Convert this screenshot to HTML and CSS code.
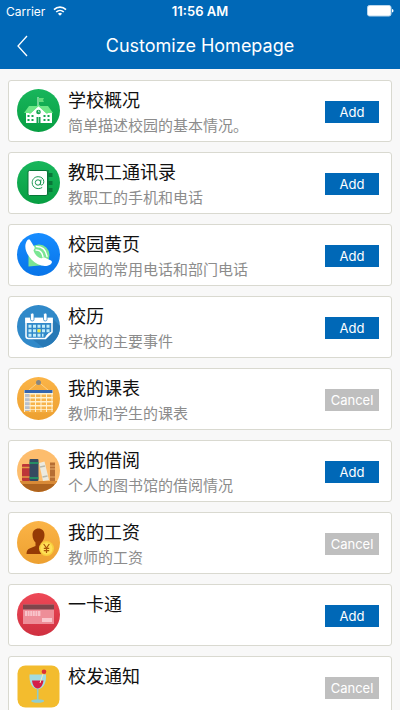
FILE: index.html
```html
<!DOCTYPE html>
<html lang="zh-CN">

<head>
    <meta charset="utf-8">
    <meta name="viewport" content="width=device-width, initial-scale=1">
    <title>Customize Homepage</title>
    <link rel="stylesheet" href="styles.css">
</head>

<body>
    <header class="header">
        <div class="status-bar">
            <div class="carrier">
                <span>Carrier</span>
                <svg width="14" height="10" viewBox="0 0 14 10" fill="none" stroke="#fff" stroke-width="1.6">
                    <path d="M1 3.6C4.4.3 9.6.3 13 3.6M3.2 6C5.4 3.9 8.6 3.9 10.8 6" />
                    <path d="M7 9.8L4.9 7.7Q7 6 9.1 7.7Z" fill="#fff" stroke="none" />
                </svg>
            </div>
            <span class="clock">11:56 AM</span>
            <div class="battery">
                <svg width="27" height="12" viewBox="0 0 27 12">
                    <rect x=".5" y=".5" width="23.5" height="10.5" rx="2" fill="#fff" stroke="#b9d6ec" />
                    <path d="M25 4q1.5.3 1.5 1.8T25 7.6z" fill="#fff" />
                </svg>
            </div>
        </div>
        <div class="nav-bar">
            <button class="back" type="button" aria-label="Back">
                <svg width="11" height="22" viewBox="0 0 11 22" fill="none" stroke="#fff" stroke-width="1.3">
                    <path d="M10 1L1 11l9 10" />
                </svg>
            </button>
            <h1>Customize Homepage</h1>
        </div>
    </header>

    <!-- List of homepage modules -->
    <ul class="module-list">
        <li class="card">
            <svg class="icon" viewBox="0 0 43 43">
                <defs>
                    <linearGradient id="green" x2="0" y2="1"><stop stop-color="#18b65c" /><stop offset="1" stop-color="#079e42" /></linearGradient>
                </defs>
                <circle cx="21.5" cy="21.5" r="21.5" fill="url(#green)" />
                <path d="M21 8v9" stroke="#d9f7df" />
                <path d="M21.5 9h5.500l-1 2 1 2h-5.500z" fill="#63dc7c" />
                <path d="M9 23h26v11H9z" fill="#fff" />
                <path d="M12 17h19l5 7H7z" fill="#6ee787" />
                <path d="M14 24l7.500-7 7.500 7v10H14z" fill="#fff" />
                <path d="M12.500 24.500l9-8.200 9 8.200" fill="none" stroke="#6ee787" stroke-width="1.5" />
                <circle cx="21.5" cy="23" r="2.3" fill="#15a551" />
                <path d="M21.500 21.500V23h1.300" stroke="#fff" stroke-width=".6" fill="none" />
                <path d="M10.500 26h2v2h-2zm4 0h2v2h-2zm12 0h2v2h-2zm4 0h2v2h-2zM10.500 30h2v2h-2zm4 0h2v2h-2zm12 0h2v2h-2zm4 0h2v2h-2zM19.500 28h4v6h-4z" fill="#15a551" />
                <path d="M21.500 28v6" stroke="#fff" stroke-width=".5" />
            </svg>
            <div class="info">
                <h2>学校概况</h2>
                <p>简单描述校园的基本情况。</p>
            </div>
            <button class="btn" type="button">Add</button>
        </li>
        <li class="card">
            <svg class="icon" viewBox="0 0 43 43">
                <circle cx="21.5" cy="21.5" r="21.5" fill="url(#green)" />
                <path d="M31 12h4.500v4H31zm0 8h4.500v4H31zm0 7h4.500v4H31z" fill="#087638" />
                <path d="M31 9v25" stroke="#0b8543" stroke-width="1.500" />
                <rect x="11" y="9.500" width="19.500" height="25" rx="1.500" fill="#fff" stroke="#087638" />
                <g fill="none" stroke="#16964f">
                    <circle cx="21" cy="21.5" r="2.7" />
                    <path d="M24 18.500l-.7 4.500c0 2 3.500 1.300 3.500-2.300 0-3.200-2.600-5-5.600-5-3.800 0-6 2.800-6 6 0 5 5.500 7.500 10 4.800" />
                </g>
            </svg>
            <div class="info">
                <h2>教职工通讯录</h2>
                <p>教职工的手机和电话</p>
            </div>
            <button class="btn" type="button">Add</button>
        </li>
        <li class="card">
            <svg class="icon" viewBox="0 0 43 43">
                <defs>
                    <linearGradient id="blue" x2="0" y2="1"><stop stop-color="#168cff" /><stop offset="1" stop-color="#0874e8" /></linearGradient>
                </defs>
                <circle cx="21.5" cy="21.5" r="21.5" fill="url(#blue)" />
                <path d="M11.500 33.500V22a10.500 10.500 0 1 1 11 10.500z" fill="#7be694" />
                <path d="M19 17q6 0 7 7M19.500 13.500q9 0 10.500 10" fill="none" stroke="#fff" stroke-width="1.400" stroke-linecap="round" />
                <path d="M10.500 7c1.500-1 2.500-.4 3 .8l4 6.500c.6 1.500-1 2-1 3.200 1 3.700 4 6.800 7.500 7.800 1.500 0 1.500-1.300 3.500-.8l6.500 3c1.800 1 .7 3-1 4.200-5 3-13 .8-18.500-5.200S6 13 10.500 7z" fill="#fff" />
            </svg>
            <div class="info">
                <h2>校园黄页</h2>
                <p>校园的常用电话和部门电话</p>
            </div>
            <button class="btn" type="button">Add</button>
        </li>
        <li class="card">
            <svg class="icon" viewBox="0 0 43 43">
                <circle cx="21.5" cy="21.5" r="21.5" fill="#3089c9" />
                <path d="M35 13l8 8a21.500 21.500 0 0 1-17 21.500L15 34z" fill="#2779b6" />
                <path d="M9 13.500h26V27l-6.500 6.500h-17Q9 33.500 9 31z" fill="#3089c9" stroke="#fff" stroke-width="1.500" />
                <path d="M8.300 12.800h27.400V18H8.300z" fill="#fff" />
                <path d="M28.500 33.500q1-5 6.500-6.500" fill="#fff" stroke="#fff" />
                <g fill="#fff" stroke="#3089c9" stroke-width=".8">
                    <rect x="13.500" y="8" width="3.500" height="8" rx="1.700" />
                    <rect x="26.500" y="8" width="3.500" height="8" rx="1.700" />
                </g>
                <path d="M11.500 21.300h21M11.500 25.800h21M11.500 30.300h15" stroke="#c2edfa" stroke-width="3" stroke-dasharray="3 1.500" />
                <path d="M20.500 24.300h3v3h-3z" fill="#f4ed35" />
            </svg>
            <div class="info">
                <h2>校历</h2>
                <p>学校的主要事件</p>
            </div>
            <button class="btn" type="button">Add</button>
        </li>
        <li class="card">
            <svg class="icon" viewBox="0 0 43 43">
                <defs>
                    <linearGradient id="orange" x2="0" y2="1"><stop stop-color="#fbb447" /><stop offset="1" stop-color="#eda030" /></linearGradient>
                </defs>
                <circle cx="21.5" cy="21.5" r="21.5" fill="url(#orange)" />
                <path d="M12 13l9.500-8 9.500 8" fill="none" stroke="#ffe0a4" stroke-width=".7" />
                <circle cx="21.5" cy="5.5" r="2.5" fill="#898782" />
                <path d="M7 13h29v22H7z" fill="#fff1cf" />
                <path d="M7.500 13h28v3h-28z" fill="#3565ae" />
                <path d="M8 18.700h28M8 22.700h28M8 26.700h28M8 30.700h28M8 34h28" stroke="#f7b34b" stroke-width="2.600" stroke-dasharray="4.500 1" />
                <path d="M8 17h4.500v17H8z" fill="#b8c0ce" />
                <path d="M8 20.700h5M8 24.700h5M8 28.700h5M8 32.500h5" stroke="#f5eee2" />
            </svg>
            <div class="info">
                <h2>我的课表</h2>
                <p>教师和学生的课表</p>
            </div>
            <button class="btn btn-cancel" type="button">Cancel</button>
        </li>
        <li class="card">
            <svg class="icon" viewBox="0 0 43 43">
                <defs>
                    <clipPath id="round"><circle cx="21.5" cy="21.5" r="21.5" /></clipPath>
                </defs>
                <g clip-path="url(#round)">
                    <path d="M0 0h43v43H0z" fill="#fdbd6d" />
                    <path d="M0 32h43v11H0z" fill="#ad631f" />
                    <path d="M0 32h43v3H0z" fill="#d88a37" />
                    <rect x="5" y="15" width="8" height="17" rx="1" fill="#bd3538" />
                    <path d="M5 18.500h8M5 28h8" stroke="#e49b43" stroke-width="1.500" />
                    <rect x="12.500" y="10" width="9" height="22" rx="1" fill="#364a60" />
                    <path d="M12.500 14h9M12.500 29h9" stroke="#20a565" stroke-width="1.500" />
                    <path d="M22 14l5.500-1.500L32 31l-6 1z" fill="#eceadf" />
                    <path d="M23 18l5-1M25.500 28l5-1" stroke="#b8b9ac" stroke-width="1.300" />
                    <path d="M33 13.500h5V32h-5z" fill="#b66e33" />
                    <path d="M33 17h5M33 20h5M33 28h5" stroke="#e9ad6c" />
                </g>
            </svg>
            <div class="info">
                <h2>我的借阅</h2>
                <p>个人的图书馆的借阅情况</p>
            </div>
            <button class="btn" type="button">Add</button>
        </li>
        <li class="card">
            <svg class="icon" viewBox="0 0 43 43">
                <circle cx="21.5" cy="21.5" r="21.5" fill="url(#orange)" />
                <path d="M15.500 14c0-4.200 2.500-6.500 6-6.500s6 2.300 6 6.500c0 3.500-1.500 6-3 7.500v3.500l7 3v5H9.500c0-3 1-4.500 3-5.500l6-2.500v-3.500c-1.500-1.500-3-4-3-7.500z" fill="#953a05" />
                <circle cx="29.5" cy="27.5" r="7.5" fill="#f8cf3d" />
                <circle cx="29.5" cy="27.5" r="6" fill="#ffdf57" />
                <path d="M26.700 23l2.800 4 2.800-4M29.500 27v5M26.800 27.300h5.400M26.800 29.600h5.400" fill="none" stroke="#a9550a" stroke-width="1.200" />
            </svg>
            <div class="info">
                <h2>我的工资</h2>
                <p>教师的工资</p>
            </div>
            <button class="btn btn-cancel" type="button">Cancel</button>
        </li>
        <li class="card">
            <svg class="icon" viewBox="0 0 43 43">
                <defs>
                    <linearGradient id="red" x2="0" y2="1"><stop stop-color="#ee4957" /><stop offset="1" stop-color="#cf3040" /></linearGradient>
                </defs>
                <circle cx="21.5" cy="21.5" r="21.5" fill="url(#red)" />
                <path d="M6 11.500h31V31H6z" fill="#ee8e98" />
                <path d="M6 11.500h31v5H6z" fill="#80454b" />
                <path d="M8 20.500h16" stroke="#f8c4ca" stroke-width="5" stroke-dasharray="2 .6" />
                <path d="M25 25h10v4H25z" fill="#fac7cd" />
            </svg>
            <div class="info">
                <h2>一卡通</h2>
            </div>
            <button class="btn" type="button">Add</button>
        </li>
        <li class="card">
            <svg class="icon" viewBox="0 0 43 43">
                <rect x=".5" y=".5" width="42" height="42" rx="8" fill="#f3bc2e" />
                <path d="M12.500 9.500h16.500c.5 7-2 14.500-8.200 14.500S12 16.500 12.500 9.500z" fill="#a4dce0" />
                <path d="M15 15.500h11.500c-.5 4-2.500 8-5.800 8s-5.200-4-5.700-8z" fill="#d51c49" />
                <path d="M23 18l4-12" stroke="#f6e8c2" />
                <circle cx="27" cy="6.8" r="2.3" fill="#dc2f35" />
                <path d="M20.700 24v11" stroke="#8acbd0" stroke-width="1.600" />
                <ellipse cx="20.700" cy="36" rx="6.500" ry="1.800" fill="#91cdd0" />
            </svg>
            <div class="info">
                <h2>校发通知</h2>
            </div>
            <button class="btn btn-cancel" type="button">Cancel</button>
        </li>
    </ul>
</body>

</html>
```
FILE: styles.css
```css
* {
    box-sizing: border-box;
}

body {
    display: flex;
    flex-direction: column;
    height: 100vh;
    margin: 0;
    background-color: #f8f8f8;
    font-family: Inter, "Noto Sans CJK SC", sans-serif;
}

h1, h2, p {
    margin: 0;
    font-weight: normal;
}

svg {
    display: block;
}

/* Header */
.header {
    flex: none;
    background-color: #0068b7;
    color: #fff;
}

.status-bar {
    display: grid;
    grid-template-columns: 1fr auto 1fr;
    align-items: center;
    height: 22px;
    padding: 0 6px;
    font-size: 12px;
}

.carrier {
    display: flex;
    align-items: center;
    gap: 8px;
}

.clock {
    font-size: 13px;
    font-weight: 600;
}

.battery {
    justify-self: end;
}

.nav-bar {
    display: grid;
    grid-template-columns: 44px 1fr 44px;
    align-items: center;
    height: 47px;
}

.nav-bar h1 {
    font-size: 18px;
    line-height: 24px;
    text-align: center;
}

.back {
    display: flex;
    justify-content: center;
    padding: 10px;
    background: none;
    border: none;
    cursor: pointer;
}

/* Module cards */
.module-list {
    flex: 1;
    min-height: 0;
    margin: 0;
    padding: 11px 8px;
    overflow-y: auto;
    scrollbar-width: none;
    list-style: none;
}

.card {
    display: flex;
    align-items: flex-start;
    gap: 8px;
    height: 62px;
    margin-bottom: 10px;
    padding: 8px 12px 6px 8px;
    background-color: #fff;
    border: 1px solid #d9d9d0;
    border-radius: 3px;
}

.icon {
    flex: none;
    width: 43px;
    height: 43px;
}

.info {
    flex: 1;
}

.info h2 {
    color: #111;
    font-size: 18px;
    line-height: 24px;
}

.info p {
    color: #8c8c8c;
    font-size: 15px;
    line-height: 26px;
}

.btn {
    align-self: center;
    width: 54px;
    height: 22px;
    padding: 0;
    background-color: #0068b7;
    border: none;
    color: #fff;
    font-family: inherit;
    font-size: 13px;
    cursor: pointer;
}

.btn-cancel {
    background-color: #bfbfbf;
}
```
